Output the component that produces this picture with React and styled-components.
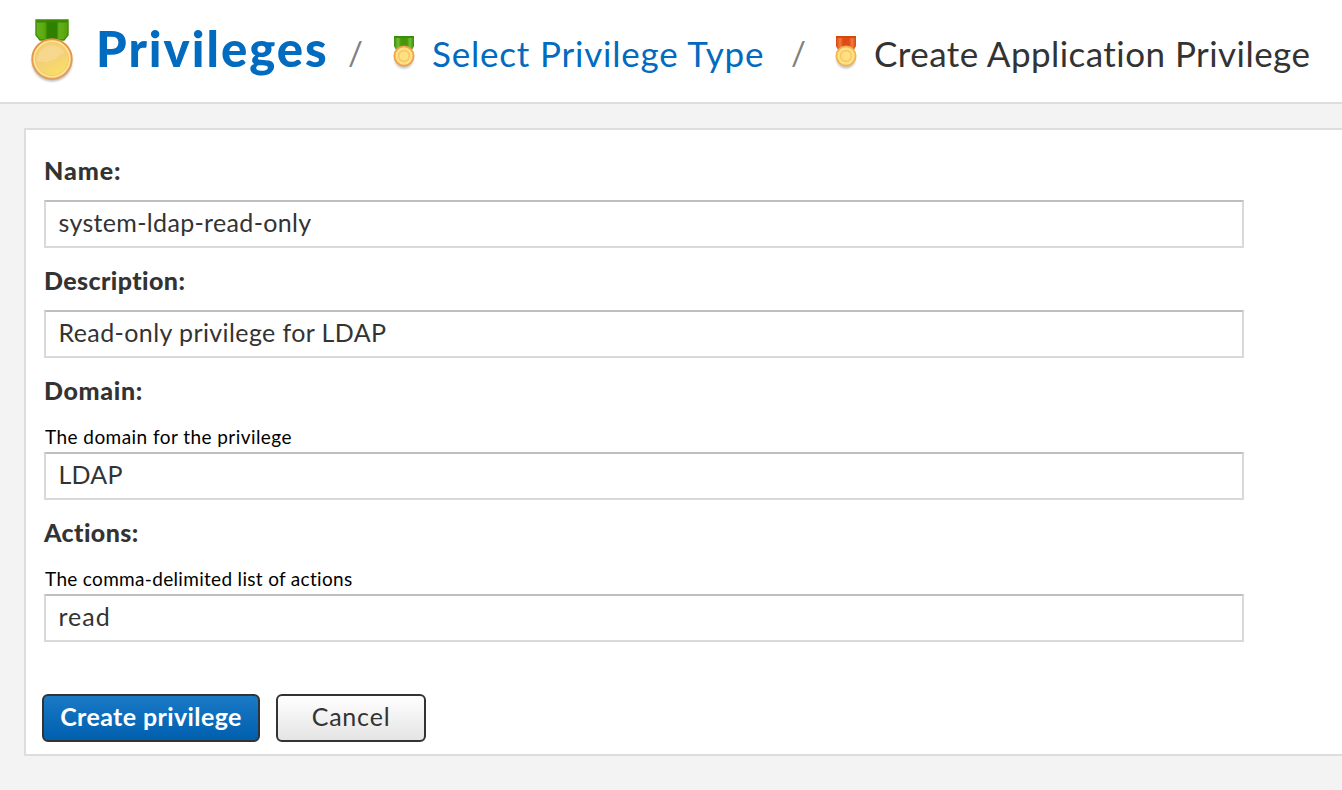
import React from 'react';
import styled, { createGlobalStyle } from 'styled-components';

const GlobalStyle = createGlobalStyle`
  *, *::before, *::after { box-sizing: border-box; }
  body {
    margin: 0;
    background: #f3f3f3;
    color: #333;
    font-family: Lato, 'Liberation Sans', sans-serif;
    font-variant-ligatures: none;
    overflow: hidden;
  }
`;

const Page = styled.div`
  height: 790px;
  overflow: hidden;
`;

const Header = styled.header`
  display: flex;
  align-items: flex-start;
  height: 104px;
  padding-left: 28px;
  background: #fff;
  border-bottom: 2px solid #ddd;
  white-space: nowrap;
`;

const Title = styled.h1`
  flex: none;
  width: 252px;
  margin: 18px 0 0 20px;
  font-size: 49px;
  line-height: 60px;
  font-weight: 900;
  letter-spacing: ${(p) => p.$track || 0}px;
  color: #006bbf;
`;

const Slash = styled.span`
  flex: none;
  width: ${(p) => p.$width}px;
  margin-top: 30px;
  font-size: 33px;
  line-height: 44px;
  color: #808080;
`;

const Crumb = styled.span`
  flex: none;
  width: ${(p) => p.$width}px;
  margin: 31px 0 0 14px;
  font-size: 35px;
  line-height: 44px;
  letter-spacing: ${(p) => p.$track || 0}px;
  color: ${(p) => (p.$current ? '#333' : '#006bbf')};
`;

const LargeMedal = styled.svg`
  flex: none;
  width: 48px;
  height: 66px;
  margin-top: 17px;
`;

const SmallMedal = styled.svg`
  flex: none;
  width: 28px;
  height: 38px;
  margin-top: 34px;
`;

const Panel = styled.form`
  height: 628px;
  margin: 24px 0 0 24px;
  padding: 25px 0 0 18px;
  background: #fff;
  border: 2px solid #ddd;
  border-right: 0;
`;

const Field = styled.div`
  width: 1200px;
  margin-bottom: 17px;
`;

const Label = styled.label`
  display: block;
  height: 45px;
  font-size: 25px;
  line-height: 31px;
  font-weight: 900;
  letter-spacing: ${(p) => p.$track || 0}px;
`;

const Hint = styled.div`
  height: 32px;
  padding-left: 1px;
  font-size: 19px;
  line-height: 34px;
  letter-spacing: ${(p) => p.$track || 0}px;
  color: #000;
`;

const Input = styled.input`
  display: block;
  width: 100%;
  height: 48px;
  padding: 0 12px 4px 12.5px;
  border: 2px solid #d9d9d9;
  border-top-color: #bfbfbf;
  border-radius: 0;
  outline: 0;
  background: #fff;
  color: #333;
  font: 25px Lato, 'Liberation Sans', sans-serif;
  letter-spacing: ${(p) => p.$track || 0}px;
`;

const Actions = styled.div`
  display: flex;
  gap: 16px;
  margin: 52px 0 0 -2px;
`;

const Button = styled.button`
  width: ${(p) => p.$width}px;
  height: 48px;
  padding: 0 0 4px;
  border: 2px solid #333;
  border-radius: 6px;
  background: ${(p) => (p.$primary ? 'linear-gradient(#1b7ac6, #005fae)' : 'linear-gradient(#fff, #e4e4e4)')};
  color: ${(p) => (p.$primary ? '#fff' : '#333')};
  font: ${(p) => (p.$primary ? 700 : 400)} 25px Lato, 'Liberation Sans', sans-serif;
  letter-spacing: ${(p) => p.$track || 0}px;
  white-space: nowrap;
`;

function PrivilegeMedal() {
  return (
    <LargeMedal viewBox="0 0 48 66" aria-hidden="true">
      <defs>
        <linearGradient id="green" x1="0" x2="1">
          <stop offset="0" stopColor="#69b51c" />
          <stop offset=".28" stopColor="#58a80e" />
          <stop offset=".36" stopColor="#2f8000" />
          <stop offset=".64" stopColor="#2f8000" />
          <stop offset=".72" stopColor="#65b117" />
          <stop offset="1" stopColor="#55a00d" />
        </linearGradient>
        <linearGradient id="gold" x1=".2" y1="0" x2=".7" y2="1">
          <stop offset="0" stopColor="#f5cf72" />
          <stop offset=".5" stopColor="#f3d077" />
          <stop offset="1" stopColor="#fadf64" />
        </linearGradient>
        <linearGradient id="rim" x1="0" y1="0" x2="0" y2="1">
          <stop offset="0" stopColor="#ea9146" />
          <stop offset="1" stopColor="#dfa05a" />
        </linearGradient>
        <filter id="soft" x="-20%" y="-20%" width="140%" height="140%">
          <feGaussianBlur stdDeviation="1.3" />
        </filter>
        <filter id="edge">
          <feGaussianBlur stdDeviation=".45" />
        </filter>
      </defs>
      <ellipse cx="24" cy="45" rx="20" ry="19.5" fill="#777" opacity=".5" filter="url(#soft)" />
      <g filter="url(#edge)">
        <path d="M8 3h32v15l-4 5H12l-4-5Z" fill="url(#green)" stroke="#3f8b08" strokeWidth="1.4" />
        <path d="M9 4.5h30" stroke="#398507" strokeWidth="2" />
        <circle cx="24" cy="42" r="19.7" fill="#ffe698" stroke="url(#rim)" strokeWidth="2" />
        <circle cx="24" cy="42" r="16.6" fill="url(#gold)" stroke="#f0c460" strokeWidth=".8" />
        <path d="M9 44a15 15 0 0 1 28-8C31 36 28 45 18 45c-4 0-6-1-9-1Z" fill="#fff" opacity=".18" />
      </g>
    </LargeMedal>
  );
}

function CrumbMedal({ id, dark, mid, light, rim }) {
  return (
    <SmallMedal viewBox="0 0 28 38" aria-hidden="true">
      <defs>
        <linearGradient id={`${id}-ribbon`} x1="0" x2="1">
          <stop offset="0" stopColor={dark} />
          <stop offset=".2" stopColor={light} />
          <stop offset=".36" stopColor={mid} />
          <stop offset=".65" stopColor={mid} />
          <stop offset=".8" stopColor={light} />
          <stop offset="1" stopColor={dark} />
        </linearGradient>
        <filter id={`${id}-soft`} x="-20%" y="-20%" width="140%" height="140%">
          <feGaussianBlur stdDeviation=".9" />
        </filter>
        <filter id={`${id}-edge`}>
          <feGaussianBlur stdDeviation=".55" />
        </filter>
      </defs>
      <ellipse cx="14" cy="25" rx="9.5" ry="9.5" fill="#888" opacity=".5" filter={`url(#${id}-soft)`} />
      <g filter={`url(#${id}-edge)`}>
        <path d="M4 2h20v10l-2 4H6l-2-4Z" fill={`url(#${id}-ribbon)`} />
        <path d="M4 3h20" stroke={dark} strokeWidth="2" />
        <circle cx="14" cy="22" r="9.6" fill="#ffe087" stroke={rim} strokeWidth="1.8" />
        <circle cx="14" cy="22" r="5.4" fill="#ffe083" stroke="#f8c860" strokeWidth="1.6" />
      </g>
    </SmallMedal>
  );
}

export default function App() {
  return (
    <Page>
      <GlobalStyle />
      <Header>
        <PrivilegeMedal />
        <Title $track={2}>Privileges</Title>
        <Slash $width={42}>/</Slash>
        <CrumbMedal id="type" dark="#398d08" mid="#459707" light="#76bd35" rim="#f1a04a" />
        <Crumb $width={359} $track={0.8}>Select Privilege Type</Crumb>
        <Slash $width={41}>/</Slash>
        <CrumbMedal id="create" dark="#d64a0b" mid="#df4c16" light="#f27a42" rim="#efb451" />
        <Crumb $width={450} $track={0.45} $current>Create Application Privilege</Crumb>
      </Header>
      <Panel>
        <Field>
          <Label htmlFor="name" $track={0.9}>Name:</Label>
          <Input id="name" defaultValue="system-ldap-read-only" $track={0.33} />
        </Field>
        <Field>
          <Label htmlFor="description" $track={0.4}>Description:</Label>
          <Input id="description" defaultValue="Read-only privilege for LDAP" $track={0.4} />
        </Field>
        <Field>
          <Label htmlFor="domain" $track={0.65}>Domain:</Label>
          <Hint $track={0.44}>The domain for the privilege</Hint>
          <Input id="domain" defaultValue="LDAP" $track={0.2} />
        </Field>
        <Field>
          <Label htmlFor="actions" $track={0.4}>Actions:</Label>
          <Hint $track={0.32}>The comma-delimited list of actions</Hint>
          <Input id="actions" defaultValue="read" $track={1} />
        </Field>
        <Actions>
          <Button type="button" $primary $width={218} $track={0.4}>Create privilege</Button>
          <Button type="button" $width={150} $track={0.8}>Cancel</Button>
        </Actions>
      </Panel>
    </Page>
  );
}
